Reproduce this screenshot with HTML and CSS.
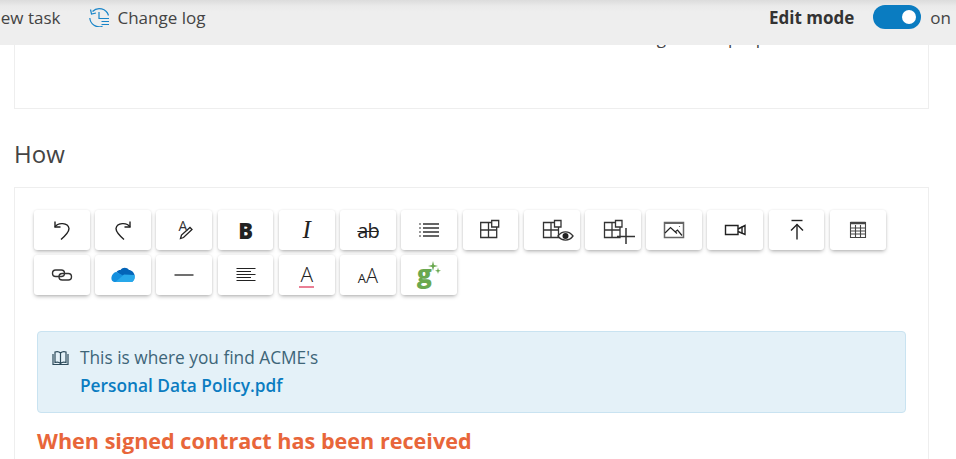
FILE: index.html
```html
<!DOCTYPE html>
<html lang="en">
<head>
  <meta charset="UTF-8">
  <title>How</title>
  <link rel="stylesheet" href="styles.css">
</head>
<body>
  <div class="topbar">
    <div class="topbar-item first-item">New task</div>
    <div class="topbar-item">
      <svg class="log-icon" width="20" height="20" viewBox="0 0 20 20" fill="none" stroke="#1a85c8" stroke-width="1.2">
        <path d="M3.500 4.500A9.500 9.500 0 0 1 19.500 8.500"/>
        <path d="M1.500 2.500L2.500 7L7 6"/>
        <path d="M.8 11A9.500 9.500 0 0 0 13.500 19.300"/>
        <path d="M10 5V11.500H20"/>
        <path d="M12.500 14.500H20M12.500 17.500H20"/>
      </svg>
      Change log
    </div>
    <div class="edit-mode">
      <span class="edit-label">Edit mode</span>
      <span class="toggle"><span class="knob"></span></span>
      <span class="toggle-state">on</span>
    </div>
  </div>

  <div class="card top-card">
    <p class="hidden-line">being for the purpose</p>
  </div>

  <h2 class="section-title">How</h2>

  <div class="card editor">
    <div class="toolbar">
      <button class="tool"><svg width="24" height="24" viewBox="0 0 24 24" fill="none" stroke="#222" stroke-width="1.400"><path d="M5 3.500V9H10.500"/><path d="M5 9C8 4 18 4.500 19 10.500C19 14 15 18 11 21.500"/></svg></button>
      <button class="tool"><svg width="24" height="24" viewBox="0 0 24 24" fill="none" stroke="#222" stroke-width="1.400"><path d="M19 3.500V9H13.500"/><path d="M19 9C16 4 6 4.500 5 10.500C5 14 9 18 13 21.500"/></svg></button>
      <button class="tool"><span class="pen-letter">A</span><svg width="24" height="24" viewBox="0 0 24 24" fill="none" stroke="#222" stroke-width="1.300"><path d="M8.500 20.500L9.500 17L18 9.500L20 11.500L11.500 19.500Z"/></svg></button>
      <button class="tool"><span class="glyph-bold">B</span></button>
      <button class="tool"><span class="glyph-italic">I</span></button>
      <button class="tool"><span class="glyph-strike">ab</span></button>
      <button class="tool"><svg width="24" height="24" viewBox="0 0 24 24" fill="none" stroke="#333" stroke-width="1.400"><path d="M6 6H22M6 10H22M6 14H22M6 18H22"/><path d="M2 6H4M2 10H4M2 14H4M2 18H4" stroke-width="1"/></svg></button>
      <button class="tool"><svg width="24" height="24" viewBox="0 0 24 24" fill="none" stroke="#333" stroke-width="1.300"><path d="M2.700 4.500H18.700V19.500H2.700Z"/><path d="M2.700 12H18.700M10.500 4.500V19.500"/><path d="M13.700 2.500H20.700V9H13.700Z" fill="#fff"/></svg></button>
      <button class="tool"><svg width="44" height="24" viewBox="0 0 44 24" fill="none" stroke="#333" stroke-width="1.300"><path d="M13.500 4.500H28.500V19.500H13.500ZM13.500 12H28.500M21 4.500V19.500"/><path d="M24.500 2.500H31V9H24.500Z" fill="#fff"/><path d="M28 18C32 12.500 39 12.500 43 18C39 23.500 32 23.500 28 18Z" fill="#fff"/><circle cx="35.500" cy="18" r="3" fill="#222" stroke="none"/></svg></button>
      <button class="tool"><svg width="44" height="30" viewBox="0 0 44 30" fill="none" stroke="#333" stroke-width="1.300"><path d="M13.500 7.500H29V22.500H13.500ZM13.500 15H29M21 7.500V22.500"/><path d="M24.500 5.500H31V12H24.500Z" fill="#fff"/><path d="M26 21.500H44M35 13V29" stroke-width="1.500"/></svg></button>
      <button class="tool"><svg width="24" height="24" viewBox="0 0 24 24" fill="none" stroke="#666" stroke-width="1.500"><path d="M2.500 4.500H21.500V19.500H2.500Z"/><path d="M2.500 5H21.500" stroke-width="2"/><path d="M3 15L8.500 9.500L15 15.500M13 14L15.500 12L20 17.500" stroke="#222" stroke-width="1.200"/><circle cx="17.500" cy="8.500" r=".6" fill="#444" stroke="none"/></svg></button>
      <button class="tool"><svg width="24" height="24" viewBox="0 0 24 24" fill="none" stroke="#222" stroke-width="1.400"><path d="M2.500 7.500H15V16.500H2.500Z"/><path d="M15 11L22 7.500V16.500L15 13.500"/><path d="M19 8.500V15.500"/></svg></button>
      <button class="tool"><svg width="24" height="24" viewBox="0 0 24 24" fill="none" stroke="#222" stroke-width="1.400"><path d="M6.500 2.500H17.500"/><path d="M12 6.500V21.500"/><path d="M6 12.500L12 6.500L18 12.500"/></svg></button>
      <button class="tool"><svg width="24" height="24" viewBox="0 0 24 24" fill="none" stroke="#444" stroke-width="1.100"><path d="M4.500 4.500H19.500V19.500H4.500Z"/><path d="M4.500 5H19.500" stroke-width="2.500"/><path d="M4.500 10H19.500M4.500 13H19.500M4.500 16H19.500M9.500 7V19.500M14.500 7V19.500"/></svg></button>

      <button class="tool"><svg width="24" height="24" viewBox="0 0 24 24" fill="none" stroke="#333" stroke-width="1.400"><rect x="2.500" y="7" width="12" height="6.500" rx="3.200"/><rect x="9" y="10.500" width="12.500" height="6.500" rx="3.200"/></svg></button>
      <button class="tool"><svg width="24" height="16" viewBox="0 0 24 16"><path d="M9.500 3C11.500 0 16 0 18 3C20.500 3 23 5.500 23.500 8L14 11L5.500 5C6.500 3.500 8 3 9.500 3Z" fill="#0364b8"/><path d="M5.500 5L12 8.500L23.500 8C24 11 23 14.500 20.500 15L4.500 15C1.500 15 0 13 .5 10C1 7 3.500 5 5.500 5Z" fill="#1490df"/><path d="M13 7.500L23.500 8C24.500 11 22.500 15 20.500 15L4.500 15Z" fill="#28a8ea"/></svg></button>
      <button class="tool"><svg width="24" height="24" viewBox="0 0 24 24" fill="none" stroke="#222" stroke-width="1.300"><path d="M2.500 12H21.500"/></svg></button>
      <button class="tool"><svg width="24" height="24" viewBox="0 0 24 24" fill="none" stroke="#222" stroke-width="1.200"><path d="M2.500 5.500H21.500M2.500 8.500H17M2.500 11.500H21.500M2.500 14.500H17M2.500 17.500H21.500"/></svg></button>
      <button class="tool"><span class="glyph-font">A</span></button>
      <button class="tool"><span class="glyph-size"><small>A</small>A</span></button>
      <button class="tool">
        <span class="glyph-g">g</span>
        <svg class="sparkle" width="16" height="16" viewBox="0 0 16 16" fill="#6aa84f"><path d="M5 0L6 4L10 5L6 6L5 10L4 6L0 5L4 4Z"/><path d="M10 6.500L10.700 9L13 9.700L10.700 10.400L10 13L9.300 10.400L7 9.700L9.300 9Z"/></svg>
      </button>
    </div>

    <div class="callout">
      <svg class="book-icon" width="17" height="16" viewBox="0 0 17 16" fill="none" stroke="#2c4a5a" stroke-width="1.200"><path d="M8.500 3V14M8.500 3C7 1.500 4.500 1.500 3 2V12.500C4.500 12 7 12 8.500 13.500C10 12 12.500 12 14 12.500V2C12.500 1.500 10 1.500 8.500 3Z"/><path d="M1 4V14.500H16V4"/></svg>
      <div class="callout-text">
        <div>This is where you find ACME's</div>
        <a class="callout-link" href="#">Personal Data Policy.pdf</a>
      </div>
    </div>

    <h3 class="orange-title">When signed contract has been received</h3>
  </div>
</body>
</html>
```

FILE: styles.css
```css
html, body {
  height: 100%;
}
body {
  margin: 0;
  background: #fff;
  font-family: "Open Sans", Arial, sans-serif;
  color: #444;
  overflow: hidden;
}
.topbar {
  position: relative;
  z-index: 2;
  display: flex;
  align-items: center;
  height: 45px;
  padding-bottom: 11px;
  padding-right: 5px;
  box-sizing: border-box;
  background: linear-gradient(#dcdcdc, #eaeaea 6px, #eee 12px);
  font-size: 17px;
}
.topbar-item {
  display: flex;
  align-items: center;
  color: #444;
  white-space: nowrap;
}
.first-item {
  margin-left: -12px;
  margin-right: 29px;
}
.log-icon {
  margin-right: 8px;
}
.edit-mode {
  display: flex;
  align-items: center;
  margin-left: auto;
}
.edit-label {
  font-weight: 700;
  color: #333;
}
.toggle {
  display: flex;
  align-items: center;
  justify-content: flex-end;
  width: 48px;
  height: 24px;
  margin: 0 9px 0 19px;
  padding-right: 5px;
  box-sizing: border-box;
  border-radius: 12px;
  background: #0a7cc1;
}
.knob {
  width: 14px;
  height: 14px;
  border-radius: 50%;
  background: #fff;
}
.card {
  margin: 0 27px 0 14px;
  background: #fff;
  border: 1px solid #eee;
}
.top-card {
  margin-top: -37px;
  box-sizing: border-box;
  height: 101px;
}
.hidden-line {
  margin: 18px 0 0;
  padding-left: 607px;
  font-size: 17px;
  line-height: 22px;
  white-space: nowrap;
}
.section-title {
  margin: 28px 0 17px 14px;
  font-size: 24px;
  line-height: 33px;
  font-weight: 400;
  color: #444;
}
.editor {
  padding: 22px 22px 0;
  height: 250px;
  overflow: hidden;
}
.toolbar {
  display: flex;
  flex-wrap: wrap;
  gap: 5px 5.43px;
  margin: 0 0 0 -3px;
  width: 860px;
}
.tool {
  position: relative;
  display: flex;
  align-items: center;
  justify-content: center;
  width: 55.8px;
  height: 40px;
  padding: 0;
  border: 0;
  border-radius: 3px;
  background: #fff;
  box-shadow: 0 2px 4px -1px rgba(0, 0, 0, 0.35), 0 0 2px rgba(0, 0, 0, 0.08);
  color: #222;
}
.pen-letter {
  position: absolute;
  top: 8px;
  left: 22px;
  font-family: "Open Sans", sans-serif;
  font-size: 14px;
  line-height: 16px;
  color: #333;
}
.glyph-bold {
  font-family: "Open Sans", sans-serif;
  font-size: 22px;
  font-weight: 800;
}
.glyph-italic {
  font-family: "Liberation Serif", serif;
  font-style: italic;
  font-size: 25px;
}
.glyph-strike {
  font-family: "Open Sans", sans-serif;
  font-size: 20px;
  letter-spacing: -1px;
  text-decoration: line-through;
  text-decoration-thickness: 1px;
}
.glyph-font {
  font-family: "Open Sans", sans-serif;
  font-size: 21px;
  font-weight: 300;
  line-height: 23px;
  padding: 0 1px;
  border-bottom: 2px solid #ea7f95;
}
.glyph-size {
  font-family: "Open Sans", sans-serif;
  font-size: 20px;
  font-weight: 300;
}
.glyph-size small {
  font-size: 13px;
  font-weight: 400;
}
.glyph-g {
  margin: -4px 10px 0 0;
  font-family: "Open Sans", sans-serif;
  font-size: 25px;
  font-weight: 800;
  line-height: 30px;
  color: #6aa84f;
}
.sparkle {
  position: absolute;
  top: 6px;
  left: 27px;
}
.callout {
  display: flex;
  margin-top: 36px;
  width: 869px;
  height: 82px;
  box-sizing: border-box;
  padding: 12px 14px;
  background: #e4f1f8;
  border: 1px solid #c9e3f1;
  border-radius: 4px;
  font-size: 17.3px;
  line-height: 28px;
  color: #3d6578;
}
.book-icon {
  margin: 6px 11px 0 0;
}
.callout-link {
  display: block;
  font-weight: 600;
  color: #0a7cc1;
  text-decoration: none;
}
.orange-title {
  margin: 13px 0 0;
  font-size: 21.6px;
  line-height: 30px;
  font-weight: 700;
  color: #e8663a;
}
```
